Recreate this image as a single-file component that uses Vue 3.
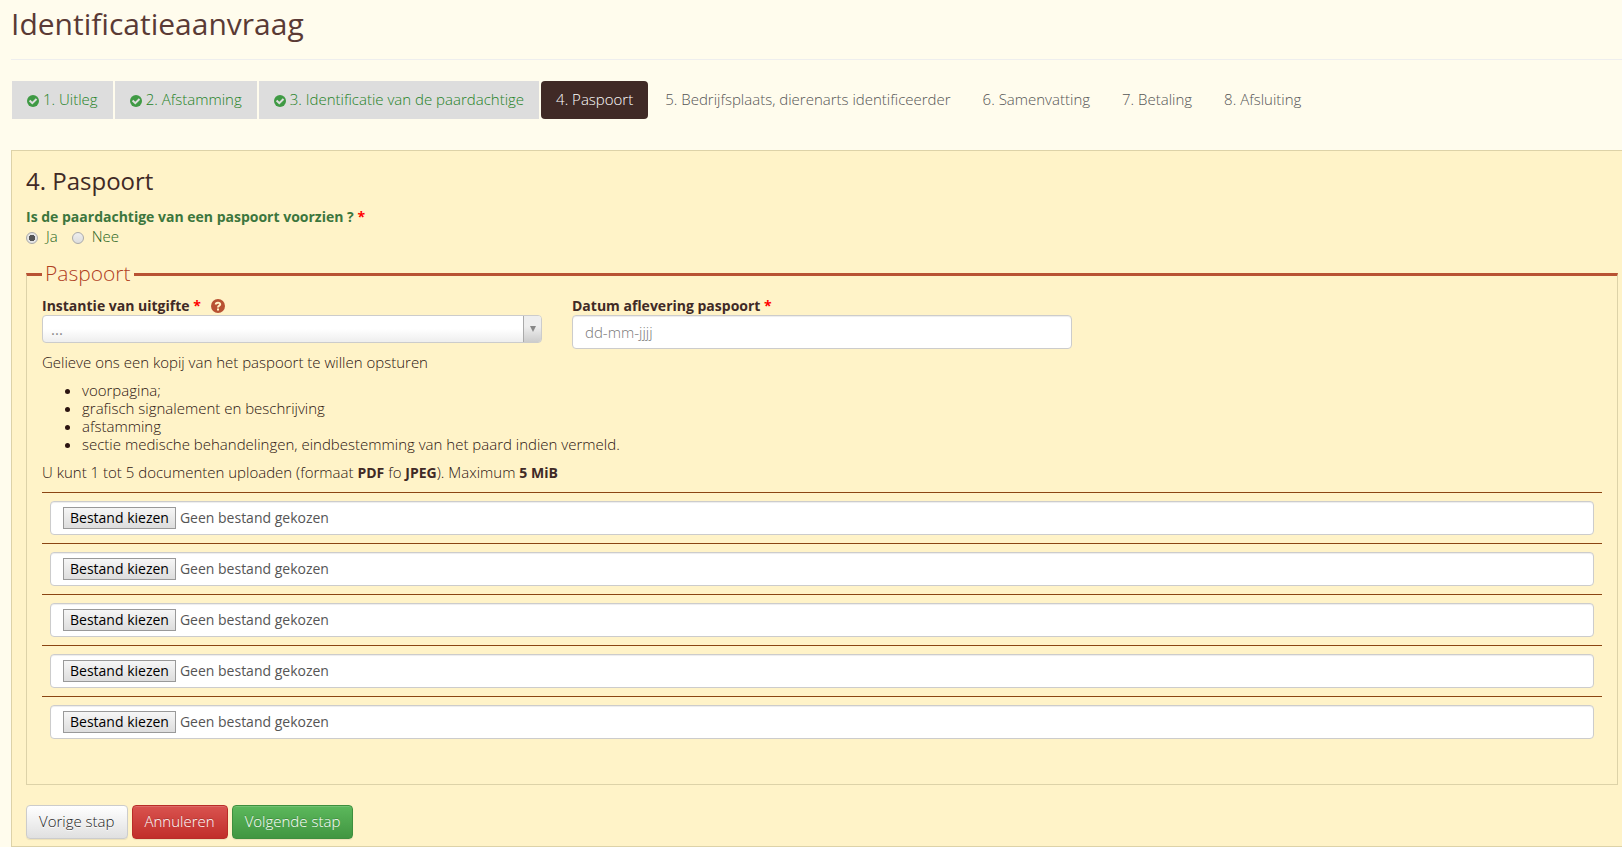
<script setup>
import { ref } from 'vue'

const steps = [
  { label: '1. Uitleg', state: 'done' },
  { label: '2. Afstamming', state: 'done' },
  { label: '3. Identificatie van de paardachtige', state: 'done' },
  { label: '4. Paspoort', state: 'active' },
  { label: '5. Bedrijfsplaats, dierenarts identificeerder', state: 'todo' },
  { label: '6. Samenvatting', state: 'todo' },
  { label: '7. Betaling', state: 'todo' },
  { label: '8. Afsluiting', state: 'todo' },
]

const documents = [
  'voorpagina;',
  'grafisch signalement en beschrijving',
  'afstamming',
  'sectie medische behandelingen, eindbestemming van het paard indien vermeld.',
]

const hasPassport = ref('ja')
const issuer = ref('')
const issueDate = ref('')
const files = ref(Array(5).fill('Geen bestand gekozen'))

function pick(index, event) {
  const file = event.target.files[0]
  files.value[index] = file ? file.name : 'Geen bestand gekozen'
}
</script>

<template>
  <main class="page">
    <h1>Identificatieaanvraag</h1>

    <nav class="steps" aria-label="Stappen">
      <a v-for="step in steps" :key="step.label" href="#" class="step" :class="step.state">
        <svg v-if="step.state === 'done'" class="check" viewBox="0 0 12 12" aria-hidden="true">
          <circle cx="6" cy="6" r="6" />
          <path d="M2.6 5.5 5.3 8.2 9.5 4" />
        </svg>{{ step.label }}
      </a>
    </nav>

    <form class="panel" @submit.prevent>
      <h2>4. Paspoort</h2>

      <div role="radiogroup" aria-labelledby="question">
        <div id="question" class="question">
          Is de paardachtige van een paspoort voorzien ? <span class="required">*</span>
        </div>
        <div class="choices">
          <label><input v-model="hasPassport" type="radio" name="passport" value="ja" />Ja</label>
          <label><input v-model="hasPassport" type="radio" name="passport" value="nee" />Nee</label>
        </div>
      </div>

      <fieldset>
        <legend>Paspoort</legend>

        <div class="fields">
          <div class="field">
            <div class="caption">
              <label for="issuer">Instantie van uitgifte <span class="required">*</span></label>
              <svg class="help" viewBox="0 0 14 14" aria-hidden="true">
                <circle cx="7" cy="7" r="7" />
                <path d="M4.8 5.4C4.8 3.2 9.2 3 9.2 5.3 9.2 6.7 7 6.6 7 8.4" />
                <path d="M7 9.6V11.4" />
              </svg>
            </div>
            <div class="select">
              <select id="issuer" v-model="issuer">
                <option value="">...</option>
              </select>
              <span class="arrow"></span>
            </div>
          </div>
          <div class="field">
            <div class="caption">
              <label for="date">Datum aflevering paspoort <span class="required">*</span></label>
            </div>
            <input id="date" v-model="issueDate" class="control" type="text" placeholder="dd-mm-jjjj" />
          </div>
        </div>

        <p>Gelieve ons een kopij van het paspoort te willen opsturen</p>
        <ul>
          <li v-for="doc in documents" :key="doc">{{ doc }}</li>
        </ul>
        <p>U kunt 1 tot 5 documenten uploaden (formaat <b>PDF</b> fo <b>JPEG</b>). Maximum <b>5 MiB</b></p>

        <div class="uploads">
          <div v-for="(name, i) in files" :key="i" class="upload">
            <label class="control file">
              <span class="choose">Bestand kiezen</span>
              <span>{{ name }}</span>
              <input type="file" accept=".pdf,.jpg,.jpeg" @change="pick(i, $event)" />
            </label>
          </div>
        </div>
      </fieldset>

      <div class="actions">
        <button type="button" class="btn light">Vorige stap</button>
        <button type="button" class="btn danger">Annuleren</button>
        <button type="submit" class="btn success">Volgende stap</button>
      </div>
    </form>
  </main>
</template>

<style>
body {
  background: #fffced;
}
</style>

<style scoped>
* {
  box-sizing: border-box;
}
.page {
  padding: 7px 0 0 11px;
  font: 300 15px/18px "Open Sans", "Noto Sans", sans-serif;
  color: #2c1410;
}
h1 {
  margin: 0;
  padding-bottom: 19px;
  border-bottom: 1px solid #eee;
  font-size: 30px;
  font-weight: 400;
  line-height: 33px;
  color: #5a3a35;
}
.steps {
  display: flex;
  gap: 2px;
  margin: 21px 0 31px 1px;
}
.step {
  padding: 9px 15px 11px;
  color: #555;
  text-decoration: none;
  white-space: nowrap;
}
.step.done {
  background: #ddd;
  color: #1f8227;
}
.step.active {
  background: #402a26;
  border-radius: 4px;
  color: #fff;
}
.check {
  width: 12px;
  height: 12px;
  margin-right: 4px;
  vertical-align: -2px;
  fill: #3f9a44;
}
.check path {
  fill: none;
  stroke: #ddd;
  stroke-width: 2;
}
.panel {
  padding: 17px 4px 7px 14px;
  background: #fff3c8;
  border: 1px solid #ddd2a8;
  border-right: 0;
}
h2 {
  margin: 0 0 14px;
  font-size: 24px;
  font-weight: 400;
  line-height: 26px;
  color: #402a26;
}
.question {
  margin-bottom: 1px;
  font-size: 14px;
  font-weight: 700;
  color: #3c763d;
}
.required {
  color: #f00;
}
.choices {
  display: flex;
  gap: 14px;
  color: #1f6421;
}
.choices label {
  display: flex;
  align-items: center;
  gap: 8px;
}
.choices input {
  appearance: none;
  width: 12px;
  height: 12px;
  margin: 3px 0 0;
  border: 1px solid #aaa;
  border-radius: 50%;
  background: linear-gradient(#eee, #ddd);
}
.choices input:checked {
  background: radial-gradient(circle, #555 0 3px, #e5e5e5 3px);
}
fieldset {
  min-width: 0;
  margin: 16px 0 20px;
  padding: 9px 15px 37px;
  border: 1px solid #ddd2a8;
  border-top: 3px solid #b85233;
}
legend {
  padding: 0 3px 3px;
  font-size: 21px;
  line-height: 24px;
  font-weight: 300;
  color: #b0401f;
}
.fields {
  display: grid;
  grid-template-columns: 1fr 1fr 1fr;
  gap: 30px;
  margin-bottom: 4px;
}
.caption {
  display: flex;
  align-items: center;
  gap: 10px;
  height: 18px;
  font-size: 14px;
  font-weight: 700;
  color: #402a26;
}
.help {
  width: 14px;
  height: 14px;
  fill: #b85233;
}
.help path {
  fill: none;
  stroke: #fff3c8;
  stroke-width: 2;
}
.select {
  position: relative;
}
select {
  display: block;
  appearance: none;
  width: 100%;
  height: 28px;
  padding: 0 26px 0 8px;
  border: 1px solid #ccc;
  border-radius: 4px;
  background: linear-gradient(#fff 50%, #eee);
  font: inherit;
  font-weight: 400;
  color: #888;
}
.arrow {
  position: absolute;
  top: 1px;
  right: 1px;
  bottom: 1px;
  display: grid;
  place-items: center;
  width: 18px;
  border-left: 1px solid #aaa;
  border-radius: 0 3px 3px 0;
  background: linear-gradient(#eee 40%, #ccc);
  pointer-events: none;
}
.arrow::after {
  content: "";
  border: solid transparent;
  border-width: 6px 3px 0;
  border-top-color: #888;
}
.control {
  display: block;
  width: 100%;
  height: 34px;
  padding: 6px 12px;
  background: #fff;
  border: 1px solid #ccc;
  border-radius: 4px;
  box-shadow: inset 0 1px 1px rgba(0, 0, 0, 0.075);
  font: inherit;
  color: #555;
}
.control::placeholder {
  color: #777;
  opacity: 1;
}
p {
  margin: 0 0 10px;
}
p b {
  font-size: 14px;
  font-weight: 700;
  line-height: 1;
  color: #402a26;
}
ul {
  margin: 0 0 10px;
  padding-left: 40px;
}
.uploads {
  padding-top: 1px;
}
.upload {
  padding: 8px;
  border-top: 1px solid #8b4513;
}
.file {
  position: relative;
  display: flex;
  align-items: center;
  gap: 4px;
  font-size: 14px;
  font-weight: 400;
}
.choose {
  padding: 1px 6px;
  border: 1px solid #999;
  background: linear-gradient(#f6f6f6, #ddd);
  color: #000;
}
.file input {
  position: absolute;
  inset: 0;
  width: 100%;
  opacity: 0;
}
.actions {
  display: flex;
  gap: 4px;
}
.btn {
  height: 34px;
  padding: 0 12px 2px;
  border: 1px solid;
  border-radius: 4px;
  box-shadow: inset 0 1px 0 rgba(255, 255, 255, 0.15), 0 1px 1px rgba(0, 0, 0, 0.075);
  font: inherit;
  color: #fff;
  text-shadow: 0 -1px 0 rgba(0, 0, 0, 0.2);
}
.light {
  border-color: #ccc;
  background: linear-gradient(#fff, #e0e0e0);
  color: #222;
  text-shadow: 0 1px 0 #fff;
}
.danger {
  border-color: #b92c28;
  background: linear-gradient(#d9534f, #c12e2a);
}
.success {
  border-color: #3e8f3e;
  background: linear-gradient(#5cb85c, #419641);
}
</style>
